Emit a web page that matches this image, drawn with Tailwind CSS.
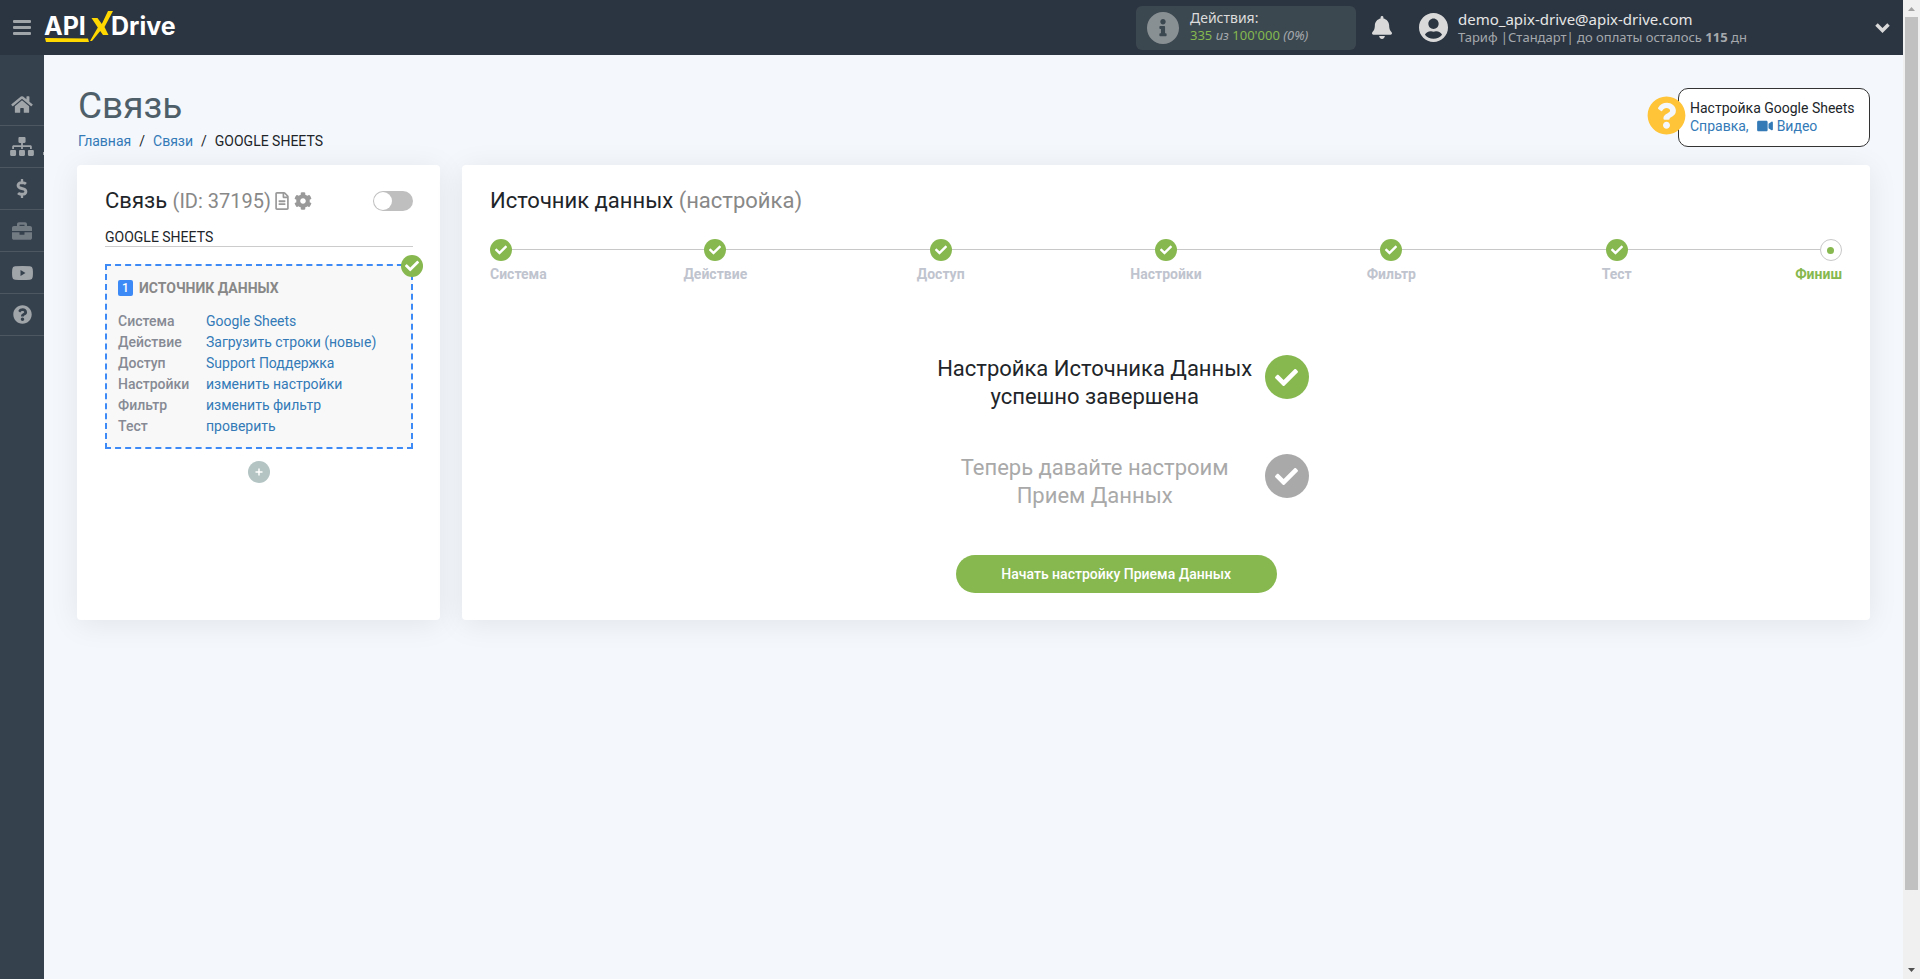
<!DOCTYPE html>
<html lang="ru">
<head>
<meta charset="utf-8">
<meta name="viewport" content="width=device-width, initial-scale=1">
<title>ApiX-Drive</title>
<script src="https://cdn.jsdelivr.net/npm/@tailwindcss/browser@4"></script>
</head>
<body class="flex min-h-screen bg-[#f4f7fc] font-[Roboto,sans-serif] text-sm text-[#212529]">
<svg class="hidden" aria-hidden="true">
  <symbol id="check" viewBox="0 0 512 512"><path d="M173.898 439.404l-166.4-166.4c-9.997-9.997-9.997-26.206 0-36.204l36.203-36.204c9.997-9.998 26.207-9.998 36.204 0L192 312.69 432.095 72.596c9.997-9.997 26.207-9.997 36.204 0l36.203 36.204c9.997 9.997 9.997 26.206 0 36.204l-294.4 294.401c-9.998 9.997-26.207 9.997-36.204-.001z"/></symbol>
  <symbol id="question" viewBox="0 0 512 512"><path d="M504 256c0 136.997-111.043 248-248 248S8 392.997 8 256C8 119.083 119.043 8 256 8s248 111.083 248 248zM262.655 90c-54.497 0-89.255 22.957-116.549 63.758-3.536 5.286-2.353 12.415 2.715 16.258l34.699 26.31c5.205 3.947 12.621 3.008 16.665-2.122 17.864-22.658 30.113-35.797 57.303-35.797 20.429 0 45.698 13.148 45.698 32.958 0 14.976-12.363 22.667-32.534 33.976C247.128 238.528 216 254.941 216 296v4c0 6.627 5.373 12 12 12h56c6.627 0 12-5.373 12-12v-1.333c0-28.462 83.186-29.647 83.186-106.667 0-58.002-60.165-102-116.531-102zM256 338c-25.365 0-46 20.635-46 46 0 25.364 20.635 46 46 46s46-20.636 46-46c0-25.365-20.635-46-46-46z"/></symbol>
</svg>

<div class="flex min-w-0 flex-1 flex-col">
  <header class="flex h-[55px] shrink-0 items-center bg-[#2b3541] font-[Noto_Sans,sans-serif]">
    <button aria-label="Меню" class="flex w-11 justify-center text-[#a0a5a9]">
      <svg class="h-4 w-[18px]" viewBox="0 0 18 16" fill="currentColor"><rect y="0" width="18" height="3" rx="1"/><rect y="6" width="18" height="3" rx="1"/><rect y="12" width="18" height="3" rx="1"/></svg>
    </button>
    <a href="#" aria-label="APIXDrive">
      <svg class="h-[55px] w-[136px]" viewBox="0 0 136 55">
        <g fill="#fff" font-family="Inter, sans-serif" font-weight="700" font-size="25"><text x="0" y="35">API</text><text x="67" y="35">Drive</text></g>
        <path fill="#ffd800" d="M1 38L44 38.400L45 42L2 42ZM47.500 18H53.500L57.800 24L64 11H69L60.500 27L64.500 35H59L56.200 31L48 41H46L53.800 27.500Z"/>
      </svg>
    </a>
    <div class="ml-auto flex h-11 w-[220px] items-center gap-[11px] rounded-md bg-[#3c4850] pl-[11px]">
      <svg class="size-8 shrink-0" viewBox="8 8 496 496" fill="#899094"><path d="M256 8C119.043 8 8 119.083 8 256c0 136.997 111.043 248 248 248s248-111.003 248-248C504 119.083 392.957 8 256 8zm0 110c23.196 0 42 18.804 42 42s-18.804 42-42 42-42-18.804-42-42 18.804-42 42-42zm56 254c0 6.627-5.373 12-12 12h-88c-6.627 0-12-5.373-12-12v-24c0-6.627 5.373-12 12-12h12v-64h-12c-6.627 0-12-5.373-12-12v-24c0-6.627 5.373-12 12-12h64c6.627 0 12 5.373 12 12v100h12c6.627 0 12 5.373 12 12v24z"/></svg>
      <div class="pb-1">
        <p class="text-sm leading-[18px] text-[#dcdcdc]">Действия:</p>
        <p class="text-[13px] leading-4 text-[#84b84f]">335 <i class="text-[#a5a9ad]">из</i> 100'000 <i class="text-[#a5a9ad]">(0%)</i></p>
      </div>
    </div>
    <button aria-label="Уведомления" class="ml-4 mr-[27px] text-[#d9d9d9]">
      <svg class="h-[23px] w-5" viewBox="0 0 448 512" fill="currentColor"><path d="M224 512c35.320 0 63.970-28.650 63.970-64H160.030c0 35.350 28.650 64 63.970 64zm215.390-149.710c-19.320-20.760-55.470-51.990-55.470-154.290 0-77.700-54.480-139.900-127.940-155.160V32c0-17.670-14.320-32-31.980-32s-31.980 14.330-31.980 32v20.840C118.560 68.100 64.080 130.300 64.080 208c0 102.300-36.150 133.530-55.470 154.290-6 6.450-8.660 14.160-8.610 21.710.11 16.400 12.980 32 32.100 32h383.800c19.120 0 32-15.600 32.100-32 .05-7.550-2.610-15.270-8.610-21.710z"/></svg>
    </button>
    <button class="flex w-[484px] items-center pr-[13px] text-left">
      <svg class="mr-[10px] size-[29px] shrink-0" viewBox="0 8 496 496" fill="#d9d9d9"><path d="M248 8C111 8 0 119 0 256s111 248 248 248 248-111 248-248S385 8 248 8zm0 96c48.600 0 88 39.400 88 88s-39.400 88-88 88-88-39.400-88-88 39.400-88 88-88zm0 344c-58.700 0-111.300-26.600-146.500-68.200 18.800-35.400 55.600-59.800 98.500-59.800 2.400 0 4.800.4 7.100 1.100 13 4.200 26.600 6.900 40.900 6.900 14.300 0 28-2.700 40.900-6.900 2.300-.7 4.700-1.100 7.100-1.100 42.900 0 79.700 24.400 98.500 59.800C359.300 421.400 306.700 448 248 448z"/></svg>
      <span class="flex flex-col">
        <span class="text-[15px] leading-[18px] text-[#e6e6e6]">demo_apix-drive@apix-drive.com</span>
        <span class="text-[13px] leading-[18px] text-[#a5a9ad]">Тариф |Стандарт| до оплаты осталось <b>115</b> дн</span>
      </span>
      <svg class="ml-auto h-[10px] w-[15px]" viewBox="0 0 15 10" fill="none" stroke="#d9d9d9" stroke-width="3.500"><path d="M1.500 1.500L7.500 7.500L13.500 1.500"/></svg>
    </button>
  </header>

  <div class="flex flex-1">
    <nav class="w-11 shrink-0 bg-[#36414e] pt-7 text-[#a0a5a9]">
      <a href="#" aria-label="Главная" class="flex h-[43px] items-center justify-center border-b border-[#4d5762]"><svg class="h-[19px] w-[22px]" viewBox="0 0 576 512" fill="currentColor"><path d="M280.370 148.260L96 300.110V464a16 16 0 0 0 16 16l112.060-.29a16 16 0 0 0 15.920-16V368a16 16 0 0 1 16-16h64a16 16 0 0 1 16 16v95.640a16 16 0 0 0 16 16.050L464 480a16 16 0 0 0 16-16V300L295.670 148.260a12.190 12.190 0 0 0-15.300 0zM571.600 251.470L488 182.560V44.050a12 12 0 0 0-12-12h-56a12 12 0 0 0-12 12v72.610L318.470 43a48 48 0 0 0-61 0L4.340 251.470a12 12 0 0 0-1.600 16.900l25.500 31A12 12 0 0 0 45.150 301l235.220-193.740a12.190 12.190 0 0 1 15.300 0L530.900 301a12 12 0 0 0 16.900-1.600l25.500-31a12 12 0 0 0-1.700-16.930z"/></svg></a>
      <a href="#" aria-label="Связи" class="relative flex h-[42px] items-center justify-center border-b border-[#4d5762]"><svg class="h-[19px] w-6" viewBox="0 0 640 512" fill="currentColor"><path d="M128 352H32c-17.670 0-32 14.330-32 32v96c0 17.670 14.330 32 32 32h96c17.670 0 32-14.330 32-32v-96c0-17.670-14.330-32-32-32zm-24-80h192v48h48v-48h192v48h48v-57.590c0-21.170-17.230-38.410-38.410-38.410H344v-64h40c17.670 0 32-14.330 32-32V32c0-17.670-14.330-32-32-32H256c-17.670 0-32 14.330-32 32v96c0 17.670 14.330 32 32 32h40v64H94.410C73.230 224 56 241.230 56 262.410V320h48v-48zm264 80h-96c-17.670 0-32 14.330-32 32v96c0 17.670 14.330 32 32 32h96c17.670 0 32-14.330 32-32v-96c0-17.670-14.330-32-32-32zm240 0h-96c-17.670 0-32 14.330-32 32v96c0 17.670 14.330 32 32 32h96c17.670 0 32-14.330 32-32v-96c0-17.670-14.330-32-32-32z"/></svg><span class="absolute right-0 bottom-3 h-[3px] w-px bg-[#a0a5a9]"></span></a>
      <a href="#" aria-label="Оплата" class="flex h-[42px] items-center justify-center border-b border-[#4d5762]"><svg class="h-[19px] w-3" viewBox="0 0 288 512" fill="currentColor"><path d="M209.200 233.400l-108-31.600C88.700 198.200 80 186.500 80 173.500c0-16.300 13.200-29.500 29.500-29.500h66.300c12.200 0 24.200 3.700 34.200 10.500 6.100 4.100 14.300 3.100 19.500-2l34.800-34c7.100-6.900 6.100-18.400-1.800-24.500C238 74.800 207.400 64.100 176 64V16c0-8.800-7.200-16-16-16h-32c-8.800 0-16 7.200-16 16v48h-2.500C45.800 64-5.400 118.700.5 183.600c4.200 46.100 39.400 83.600 83.800 96.600l102.500 30c12.500 3.700 21.200 15.300 21.200 28.300 0 16.300-13.200 29.500-29.500 29.500h-66.300C100 368 88 364.300 78 357.500c-6.100-4.100-14.300-3.100-19.500 2l-34.800 34c-7.100 6.900-6.100 18.400 1.800 24.500 24.500 19.200 55.100 29.900 86.500 30v48c0 8.800 7.200 16 16 16h32c8.800 0 16-7.200 16-16v-48.200c46.600-.9 90.300-28.600 105.700-72.700 21.500-61.600-14.600-124.800-72.500-141.700z"/></svg></a>
      <a href="#" aria-label="Проекты" class="flex h-[42px] items-center justify-center border-b border-[#4d5762] text-[#727a82]"><svg class="size-5" viewBox="0 0 512 512" fill="currentColor"><path d="M320 336c0 8.840-7.160 16-16 16h-96c-8.840 0-16-7.160-16-16v-48H0v144c0 25.600 22.400 48 48 48h416c25.600 0 48-22.400 48-48V288H320v48zm144-208h-80V80c0-25.600-22.400-48-48-48H176c-25.600 0-48 22.400-48 48v48H48c-25.600 0-48 22.400-48 48v80h512v-80c0-25.600-22.400-48-48-48zm-144 0H192V96h128v32z"/></svg></a>
      <a href="#" aria-label="Видео" class="flex h-[42px] items-center justify-center border-b border-[#4d5762]"><svg class="h-[14px] w-[21px]" viewBox="0 0 21 14" fill="currentColor" fill-rule="evenodd"><path d="M3 .3Q10.500-.3 18 .3Q20.500.5 20.700 3Q21.200 7 20.700 11Q20.500 13.500 18 13.700Q10.500 14.300 3 13.700Q.5 13.500.3 11Q-.2 7 .3 3Q.5.5 3 .3ZM8.500 4V10L13.500 7Z"/></svg></a>
      <a href="#" aria-label="Справка" class="flex h-[42px] items-center justify-center border-b border-[#4d5762]"><svg class="size-[19px]" fill="currentColor"><use href="#question"/></svg></a>
    </nav>

    <main class="min-w-0 flex-1 px-[33px] pt-[27px]">
      <div class="flex items-start justify-between pt-[6px] pl-px">
        <div class="pt-px">
          <h1 class="pb-[6px] text-[37px] leading-[33px] text-[#4f5f6a]">Связь</h1>
          <nav class="mt-[3px] flex gap-2 leading-[21px]"><a href="#" class="text-[#337ab7]">Главная</a><span>/</span><a href="#" class="text-[#337ab7]">Связи</a><span>/</span><span>GOOGLE SHEETS</span></nav>
        </div>
        <div class="relative h-[59px] w-[192px] rounded-[10px] border border-[#333] bg-white pt-[10px] pl-[11px] leading-[18px]">
          <svg class="absolute top-[7px] -left-8 size-[39px]" fill="#ffc438"><use href="#question"/></svg>
          <p class="whitespace-nowrap">Настройка Google Sheets</p>
          <p class="flex items-center text-[#337ab7]"><a href="#">Справка</a>,<a href="#" class="ml-2 flex items-center gap-1"><svg class="h-[14px] w-4" viewBox="0 0 576 512" fill="currentColor"><path d="M336.200 64H47.800C21.400 64 0 85.400 0 111.800v288.400C0 426.600 21.400 448 47.800 448h288.400c26.400 0 47.800-21.400 47.800-47.800V111.800c0-26.400-21.400-47.800-47.800-47.800zm189.400 37.700L416 177.300v157.400l109.600 75.500c21.200 14.600 50.400-.3 50.400-25.800V127.500c0-25.400-29.100-40.400-50.400-25.800z"/></svg>Видео</a></p>
        </div>
      </div>

      <div class="mt-[13px] flex gap-[22px]">
        <section class="w-[363px] shrink-0 rounded bg-white pt-[22px] pr-[27px] pl-7 shadow-[0_4px_30px_rgba(0,0,0,0.08)]">
          <div class="flex items-center">
            <h2 class="text-[22px] leading-[28px]">Связь <span class="text-xl leading-[28px] text-[#888]">(ID: 37195)</span></h2>
            <button aria-label="Журнал" class="ml-1"><svg class="h-[18px] w-[14px]" viewBox="0 0 384 512" fill="#999"><path d="M288 248v28c0 6.600-5.400 12-12 12H108c-6.600 0-12-5.400-12-12v-28c0-6.600 5.400-12 12-12h168c6.600 0 12 5.400 12 12zm-12 72H108c-6.600 0-12 5.400-12 12v28c0 6.600 5.400 12 12 12h168c6.600 0 12-5.400 12-12v-28c0-6.600-5.400-12-12-12zm108-188.100V464c0 26.500-21.500 48-48 48H48c-26.500 0-48-21.500-48-48V48C0 21.500 21.500 0 48 0h204.100C264.800 0 277 5.100 286 14.100L369.900 98c9 8.900 14.100 21.200 14.100 33.900zm-128-80V128h76.100L256 51.900zM336 464V176H232c-13.300 0-24-10.700-24-24V48H48v416h288z"/></svg></button>
            <button aria-label="Параметры" class="ml-[5px]"><svg class="size-[18px]" viewBox="0 0 512 512" fill="#999"><path d="M487.400 315.700l-42.600-24.600c4.300-23.200 4.300-47 0-70.200l42.600-24.600c4.900-2.800 7.100-8.600 5.500-14-11.100-35.600-30-67.800-54.700-94.600-3.800-4.100-10-5.100-14.800-2.300L380.800 110c-17.900-15.400-38.500-27.300-60.800-35.100V25.800c0-5.600-3.900-10.500-9.400-11.700-36.700-8.200-74.300-7.800-109.200 0-5.500 1.200-9.400 6.100-9.400 11.700V75c-22.200 7.900-42.800 19.800-60.800 35.100L88.700 85.500c-4.900-2.800-11-1.900-14.800 2.300-24.700 26.700-43.600 58.900-54.700 94.600-1.700 5.400.6 11.200 5.500 14L67.300 221c-4.300 23.200-4.300 47 0 70.200l-42.600 24.600c-4.900 2.800-7.100 8.600-5.500 14 11.100 35.600 30 67.800 54.700 94.600 3.800 4.100 10 5.100 14.800 2.300l42.600-24.600c17.900 15.400 38.500 27.300 60.800 35.100v49.200c0 5.600 3.900 10.500 9.400 11.700 36.700 8.200 74.300 7.800 109.200 0 5.500-1.200 9.400-6.100 9.400-11.700v-49.200c22.200-7.900 42.800-19.800 60.800-35.100l42.600 24.600c4.900 2.800 11 1.900 14.800-2.300 24.700-26.700 43.600-58.900 54.700-94.600 1.500-5.500-.7-11.300-5.600-14.100zM256 336c-44.100 0-80-35.900-80-80s35.900-80 80-80 80 35.900 80 80-35.900 80-80 80z"/></svg></button>
            <label class="ml-auto flex h-5 w-10 items-center rounded-full bg-[#bfbfbf] p-px"><input type="checkbox" aria-label="Включить связь" class="size-[18px] appearance-none rounded-full bg-white checked:ml-auto"></label>
          </div>
          <p class="mt-[13px] border-b border-[#ccc] leading-[18px]">GOOGLE SHEETS</p>
          <div class="relative mt-[17px] border-2 border-dashed border-[#3d8af7] bg-[#f8f8f8] px-[11px] pt-3 pb-[10px]">
            <svg class="absolute -top-3 -right-3 size-6" viewBox="0 0 24 24"><circle cx="13" cy="12" r="11" fill="#86b84f"/><use href="#check" x="6" y="5" width="14" height="14" fill="#fff"/></svg>
            <h3 class="flex items-center gap-[6px] font-bold leading-[20px] text-[#888]"><span class="flex h-4 w-[15px] items-center justify-center rounded-xs bg-[#3d8af7] text-xs font-medium text-white">1</span>ИСТОЧНИК ДАННЫХ</h3>
            <table class="mt-[13px] w-full text-left leading-[21px] text-[#337ab7] [&_th]:w-[88px] [&_th]:font-medium [&_th]:text-[#868a94]">
              <tr><th scope="row">Система</th><td><a href="#">Google Sheets</a></td></tr>
              <tr><th scope="row">Действие</th><td><a href="#">Загрузить строки (новые)</a></td></tr>
              <tr><th scope="row">Доступ</th><td><a href="#">Support Поддержка</a></td></tr>
              <tr><th scope="row">Настройки</th><td><a href="#">изменить настройки</a></td></tr>
              <tr><th scope="row">Фильтр</th><td><a href="#">изменить фильтр</a></td></tr>
              <tr><th scope="row">Тест</th><td><a href="#">проверить</a></td></tr>
            </table>
          </div>
          <button aria-label="Добавить" class="mx-auto mt-3 flex size-[22px] items-center justify-center rounded-full bg-[#b3c4c3]"><svg class="size-2" viewBox="0 0 8 8" stroke="#fff" stroke-width="1.500"><path d="M4 .5V7.500M.5 4H7.500"/></svg></button>
        </section>

        <section class="min-w-0 flex-1 rounded bg-white pt-[22px] pr-7 pb-[27px] pl-7 shadow-[0_4px_30px_rgba(0,0,0,0.08)]">
          <h2 class="text-[22px] leading-[28px]">Источник данных <span class="text-[#888]">(настройка)</span></h2>
          <div class="relative mt-6">
            <div class="absolute inset-x-2 top-[10px] h-px bg-[#c8c8c8]"></div>
            <ol class="relative grid grid-cols-12 font-bold leading-[18px] text-[#bfc4ce] [&>li]:flex [&>li]:flex-col [&>li]:gap-1">
              <li class="items-start"><span class="flex size-[22px] items-center justify-center rounded-full bg-[#86b84f]"><svg class="size-3" fill="#fff"><use href="#check"/></svg></span>Система</li>
              <li class="col-span-2 items-center"><span class="flex size-[22px] items-center justify-center rounded-full bg-[#86b84f]"><svg class="size-3" fill="#fff"><use href="#check"/></svg></span>Действие</li>
              <li class="col-span-2 items-center"><span class="flex size-[22px] items-center justify-center rounded-full bg-[#86b84f]"><svg class="size-3" fill="#fff"><use href="#check"/></svg></span>Доступ</li>
              <li class="col-span-2 items-center"><span class="flex size-[22px] items-center justify-center rounded-full bg-[#86b84f]"><svg class="size-3" fill="#fff"><use href="#check"/></svg></span>Настройки</li>
              <li class="col-span-2 items-center"><span class="flex size-[22px] items-center justify-center rounded-full bg-[#86b84f]"><svg class="size-3" fill="#fff"><use href="#check"/></svg></span>Фильтр</li>
              <li class="col-span-2 items-center"><span class="flex size-[22px] items-center justify-center rounded-full bg-[#86b84f]"><svg class="size-3" fill="#fff"><use href="#check"/></svg></span>Тест</li>
              <li class="items-end text-[#86b84f]"><span class="flex size-[22px] items-center justify-center rounded-full border border-[#c8c8c8] bg-white"><span class="size-[7px] rounded-full bg-[#86b84f]"></span></span>Финиш</li>
            </ol>
          </div>
          <div class="mx-auto mt-[72px] w-1/3">
            <div class="flex gap-4 text-[22px] leading-[28px]">
              <p class="flex w-[308px] flex-col items-center whitespace-nowrap"><span>Настройка Источника Данных</span><span>успешно завершена</span></p>
              <span class="flex size-11 shrink-0 items-center justify-center rounded-full bg-[#86b84f]"><svg class="size-[23px]" fill="#fff"><use href="#check"/></svg></span>
            </div>
            <div class="mt-[43px] flex gap-4 text-[22px] leading-[28px] text-[#a9a9a9]">
              <p class="flex w-[308px] flex-col items-center whitespace-nowrap"><span>Теперь давайте настроим</span><span>Прием Данных</span></p>
              <span class="flex size-11 shrink-0 items-center justify-center rounded-full bg-[#a9a9a9]"><svg class="size-[23px]" fill="#fff"><use href="#check"/></svg></span>
            </div>
            <button class="mt-[45px] ml-[15px] flex h-[38px] w-[321px] items-center justify-center rounded-full bg-[#86b84f] pb-px font-medium text-white">Начать настройку Приема Данных</button>
          </div>
        </section>
      </div>
    </main>
  </div>
</div>

<div aria-hidden="true" class="flex w-[17px] shrink-0 flex-col bg-[#f0f0f0]">
  <svg class="size-[17px] shrink-0" viewBox="0 0 17 17" fill="#a3a3a3"><path d="M5 11L8.500 7L12 11Z"/></svg>
  <div class="flex-1"><div class="mx-[2px] h-[92.400%] bg-[#c1c1c1]"></div></div>
  <svg class="size-[17px] shrink-0" viewBox="0 0 17 17" fill="#505050"><path d="M5 6L8.500 10L12 6Z"/></svg>
</div>
</body>
</html>
